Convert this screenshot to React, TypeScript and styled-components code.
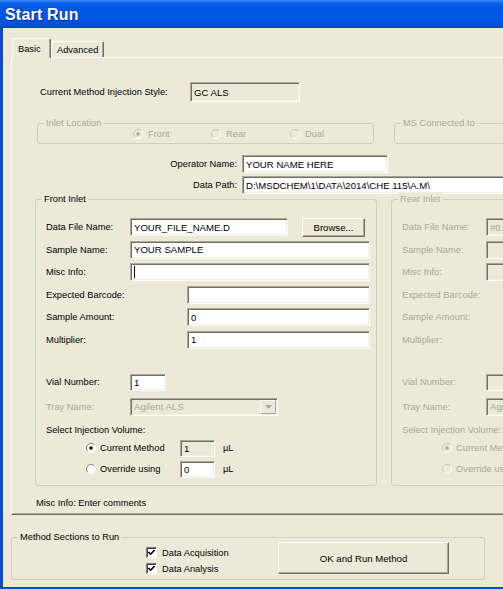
import React from 'react';
import styled, { createGlobalStyle } from 'styled-components';

const BG = '#ECE9D8';
const GREY = '#ACA899';
const DARK = '#716F64';

const GlobalStyle = createGlobalStyle`
  html, body { margin: 0; padding: 0; overflow: hidden; background: ${BG}; }
  body {
    font-family: "Liberation Sans", Arial, sans-serif;
    font-size: 9.3px;
    color: #000;
  }
  * { box-sizing: border-box; }
`;

const Frame = styled.div`
  width: 503px;
  height: 589px;
  overflow: hidden;
  display: flex;
  flex-direction: column;
`;

const TitleBar = styled.div`
  height: 28px;
  flex: none;
  display: flex;
  align-items: center;
  padding: 1px 0 0 5px;
  background: linear-gradient(
    #3C8CF7 0px, #1A6BF0 2px, #0A5CE8 4px, #0058E6 9px,
    #0055E3 18px, #0052DD 23px, #0A4FD8 25px, #0040C4 28px
  );
  color: #fff;
  font-weight: bold;
  font-size: 16px;
  letter-spacing: 0.2px;
  text-shadow: 1px 1px 0 #0A2A8E;
`;

const Body = styled.div`
  flex: 1;
  min-height: 0;
  overflow: hidden;
  background: ${BG};
  border-left: 3px solid #0A4AD8;
  border-bottom: 2px solid #0A4AD8;
  padding: 10px 0 0 8px;
`;

const TabStrip = styled.div`
  display: flex;
  align-items: flex-end;
  height: 19px;
  padding-left: 1px;
`;

const Tab = styled.div<{ $active?: boolean; $w: number }>`
  position: relative;
  z-index: ${p => (p.$active ? 2 : 1)};
  width: ${p => p.$w}px;
  height: ${p => (p.$active ? 20 : 16)}px;
  margin-bottom: ${p => (p.$active ? -1 : 0)}px;
  padding-left: 5px;
  display: flex;
  align-items: center;
  background: ${BG};
  border-style: solid;
  border-width: 1px 1px 0 1px;
  border-color: #fff ${DARK} transparent #fff;
  box-shadow: inset -1px 0 0 ${GREY};
  border-radius: 2px 2px 0 0;
`;

const TabPanel = styled.div`
  width: 560px;
  height: 458px;
  border-style: solid;
  border-width: 1px;
  border-color: #fff ${DARK} ${DARK} #fff;
  box-shadow: inset -1px -1px 0 ${GREY};
  padding-top: 24px;
`;

const StyleRow = styled.div`
  display: flex;
  align-items: center;
  height: 20px;
  padding-left: 28px;
`;

const StyleLabel = styled.span`
  width: 150px;
`;

const TextBox = styled.div<{ $w: number; $h?: number; $tone?: 'edit' | 'readonly' | 'disabled' }>`
  width: ${p => p.$w}px;
  height: ${p => p.$h ?? 18}px;
  flex: none;
  display: flex;
  align-items: center;
  padding: 0 3px;
  white-space: nowrap;
  overflow: hidden;
  border-style: solid;
  border-width: 1px;
  border-color: ${GREY} #fff #fff ${GREY};
  box-shadow: inset 1px 1px 0 ${DARK}, inset -1px -1px 0 #F1EFE2;
  background: ${p => (p.$tone === 'edit' || !p.$tone ? '#fff' : BG)};
  color: ${p => (p.$tone === 'disabled' ? GREY : '#000')};
  font-size: 9.6px;
`;

const Caret = styled.span`
  width: 1px;
  height: 12px;
  background: #000;
`;

const Group = styled.div<{ $w: number; $h: number; $ml: number }>`
  position: relative;
  flex: none;
  width: ${p => p.$w}px;
  height: ${p => p.$h}px;
  margin-left: ${p => p.$ml}px;
  border: 1px solid #D0D0BF;
  border-radius: 3px;
`;

const Legend = styled.span<{ $disabled?: boolean }>`
  position: absolute;
  top: -7px;
  left: 6px;
  padding: 0 2px;
  line-height: 12px;
  background: ${BG};
  color: ${p => (p.$disabled ? GREY : '#000')};
`;

const GroupRow = styled.div<{ $mt: number }>`
  display: flex;
  margin-top: ${p => p.$mt}px;
`;

const LocationRadios = styled.div`
  display: grid;
  grid-template-columns: 78px 79px 79px;
  align-items: center;
  height: 100%;
  padding-left: 95px;
`;

const RadioItem = styled.label<{ $disabled?: boolean; $gap?: number }>`
  display: flex;
  align-items: center;
  gap: ${p => p.$gap ?? 5}px;
  color: ${p => (p.$disabled ? GREY : '#000')};
`;

const PathGrid = styled.div`
  display: grid;
  grid-template-columns: 230px auto;
  grid-auto-rows: 18px;
  row-gap: 3px;
  align-items: center;
  margin-top: 11px;
`;

const PathLabel = styled.span`
  text-align: right;
  padding-right: 5px;
`;

const InletBody = styled.div`
  display: flex;
  flex-direction: column;
  padding: 18px 0 0 10px;
`;

const Row = styled.div<{ $mt?: number; $h?: number }>`
  display: flex;
  align-items: center;
  height: ${p => p.$h ?? 18}px;
  margin-top: ${p => p.$mt ?? 0}px;
  white-space: nowrap;
`;

const FieldLabel = styled.span<{ $w: number; $disabled?: boolean }>`
  width: ${p => p.$w}px;
  flex: none;
  color: ${p => (p.$disabled ? GREY : '#000')};
`;

const Button = styled.button<{ $w: number; $h: number; $ml?: number; $mt?: number }>`
  width: ${p => p.$w}px;
  height: ${p => p.$h}px;
  margin-left: ${p => p.$ml ?? 0}px;
  margin-top: ${p => p.$mt ?? 0}px;
  flex: none;
  padding: 0;
  font-family: inherit;
  font-size: 9.6px;
  color: #000;
  background: ${BG};
  border-style: solid;
  border-width: 1px;
  border-color: #fff ${DARK} ${DARK} #fff;
  box-shadow: inset -1px -1px 0 ${GREY};
`;

const VolumeChoice = styled.div`
  width: 94px;
  margin-left: 40px;
  flex: none;
`;

const Unit = styled.span<{ $disabled?: boolean }>`
  margin-left: 8px;
  color: ${p => (p.$disabled ? GREY : '#000')};
`;

const Combo = styled(TextBox)`
  justify-content: space-between;
  padding-right: 1px;
`;

const ComboButton = styled.span`
  width: 16px;
  height: 14px;
  display: flex;
  align-items: center;
  justify-content: center;
  background: ${BG};
  border-style: solid;
  border-width: 1px;
  border-color: #fff ${GREY} ${GREY} #fff;
`;

const FootNote = styled.div`
  margin: 11px 0 0 24px;
  line-height: 12px;
`;

const MethodBody = styled.div`
  display: flex;
  align-items: flex-start;
  padding-left: 134px;
`;

const CheckList = styled.div`
  width: 132px;
  margin-top: 9px;
  display: flex;
  flex-direction: column;
  gap: 5px;
`;

const CheckItem = styled.label`
  display: flex;
  align-items: center;
  gap: 5px;
  height: 11px;
`;

const CheckBox = styled.span`
  width: 11px;
  height: 11px;
  display: flex;
  align-items: center;
  justify-content: center;
  background: #fff;
  border-style: solid;
  border-width: 1px;
  border-color: #808080 #fff #fff #808080;
  box-shadow: inset 1px 1px 0 #404040;
`;

function Radio({ checked, disabled }: { checked?: boolean; disabled?: boolean }) {
  return (
    <svg width="10" height="10" viewBox="0 0 10 10" style={{ flex: 'none' }}>
      <circle cx="5" cy="5" r="4.5" fill={disabled ? BG : '#fff'} stroke="#fff" />
      <path d="M1.8 8.2 A4.5 4.5 0 0 1 8.2 1.8" fill="none" stroke={disabled ? '#C5C2B2' : '#808080'} />
      {checked && <circle cx="5" cy="5" r="1.7" fill={disabled ? GREY : '#000'} />}
    </svg>
  );
}

function Check() {
  return (
    <CheckBox>
      <svg width="7" height="7" viewBox="0 0 7 7">
        <path d="M0.5 3 L2.6 5.2 L6.5 1" fill="none" stroke="#000" strokeWidth="1.6" />
      </svg>
    </CheckBox>
  );
}

type InletProps = {
  title: string;
  disabled?: boolean;
  ml: number;
  w: number;
  dataFile?: string;
  sample?: string;
  caret?: boolean;
  amount?: string;
  multiplier?: string;
  vial?: string;
  current?: string;
  override?: string;
};

function Inlet(p: InletProps) {
  const d = p.disabled;
  const tone = d ? 'disabled' : 'edit';
  return (
    <Group $w={p.w} $h={287} $ml={p.ml}>
      <Legend $disabled={d}>{p.title}</Legend>
      <InletBody>
        <Row>
          <FieldLabel $w={84} $disabled={d}>Data File Name:</FieldLabel>
          <TextBox $w={158} $tone={tone}>{p.dataFile}</TextBox>
          <Button $w={63} $h={19} $ml={14}>Browse...</Button>
        </Row>
        <Row $mt={4.6}>
          <FieldLabel $w={84} $disabled={d}>Sample Name:</FieldLabel>
          <TextBox $w={240} $tone={tone}>{p.sample}</TextBox>
        </Row>
        <Row $mt={4.6}>
          <FieldLabel $w={84} $disabled={d}>Misc Info:</FieldLabel>
          <TextBox $w={240} $tone={tone}>{p.caret && <Caret />}</TextBox>
        </Row>
        <Row $mt={4.6}>
          <FieldLabel $w={141} $disabled={d}>Expected Barcode:</FieldLabel>
          <TextBox $w={183} $tone={tone} />
        </Row>
        <Row $mt={4.6}>
          <FieldLabel $w={141} $disabled={d}>Sample Amount:</FieldLabel>
          <TextBox $w={183} $tone={tone}>{p.amount}</TextBox>
        </Row>
        <Row $mt={4.6}>
          <FieldLabel $w={141} $disabled={d}>Multiplier:</FieldLabel>
          <TextBox $w={183} $tone={tone}>{p.multiplier}</TextBox>
        </Row>
        <Row $mt={25} $h={17}>
          <FieldLabel $w={84} $disabled={d}>Vial Number:</FieldLabel>
          <TextBox $w={36} $h={17} $tone={tone}>{p.vial}</TextBox>
        </Row>
        <Row $mt={7}>
          <FieldLabel $w={84} $disabled>Tray Name:</FieldLabel>
          <Combo $w={148} $tone="disabled">
            Agilent ALS
            <ComboButton>
              <svg width="7" height="4" viewBox="0 0 7 4">
                <path d="M0 0 H7 L3.5 4 Z" fill={GREY} />
              </svg>
            </ComboButton>
          </Combo>
        </Row>
        <Row $mt={8} $h={12}>
          <FieldLabel $w={200} $disabled={d}>Select Injection Volume:</FieldLabel>
        </Row>
        <Row $mt={4} $h={17}>
          <VolumeChoice>
            <RadioItem $disabled={d} $gap={4}>
              <Radio checked disabled={d} />
              Current Method
            </RadioItem>
          </VolumeChoice>
          <TextBox $w={35} $h={17} $tone={d ? 'disabled' : 'readonly'}>{p.current}</TextBox>
          <Unit $disabled={d}>µL</Unit>
        </Row>
        <Row $mt={4} $h={17}>
          <VolumeChoice>
            <RadioItem $disabled={d} $gap={4}>
              <Radio disabled={d} />
              Override using
            </RadioItem>
          </VolumeChoice>
          <TextBox $w={35} $h={17} $tone={tone}>{p.override}</TextBox>
          <Unit $disabled={d}>µL</Unit>
        </Row>
      </InletBody>
    </Group>
  );
}

export default function App() {
  return (
    <>
      <GlobalStyle />
      <Frame>
        <TitleBar>Start Run</TitleBar>
        <Body>
          <TabStrip>
            <Tab $active $w={39}>Basic</Tab>
            <Tab $w={53}>Advanced</Tab>
          </TabStrip>
          <TabPanel>
            <StyleRow>
              <StyleLabel>Current Method Injection Style:</StyleLabel>
              <TextBox $w={110} $h={20} $tone="readonly">GC ALS</TextBox>
            </StyleRow>

            <GroupRow $mt={21}>
              <Group $w={337} $h={21} $ml={25}>
                <Legend $disabled>Inlet Location</Legend>
                <LocationRadios>
                  <RadioItem $disabled><Radio checked disabled />Front</RadioItem>
                  <RadioItem $disabled><Radio disabled />Rear</RadioItem>
                  <RadioItem $disabled><Radio disabled />Dual</RadioItem>
                </LocationRadios>
              </Group>
              <Group $w={160} $h={21} $ml={20}>
                <Legend $disabled>MS Connected to</Legend>
              </Group>
            </GroupRow>

            <PathGrid>
              <PathLabel>Operator Name:</PathLabel>
              <TextBox $w={146}>YOUR NAME HERE</TextBox>
              <PathLabel>Data Path:</PathLabel>
              <TextBox $w={300}>D:\MSDCHEM\1\DATA\2014\CHE 115\A.M\</TextBox>
            </PathGrid>

            <GroupRow $mt={5}>
              <Inlet
                title="Front Inlet"
                ml={23}
                w={342}
                dataFile="YOUR_FILE_NAME.D"
                sample="YOUR SAMPLE"
                caret
                amount="0"
                multiplier="1"
                vial="1"
                current="1"
                override="0"
              />
              <Inlet title="Rear Inlet" disabled ml={14} w={342} dataFile="#0." />
            </GroupRow>

            <FootNote>Misc Info: Enter comments</FootNote>
          </TabPanel>

          <GroupRow $mt={22}>
            <Group $w={474} $h={43} $ml={0}>
              <Legend>Method Sections to Run</Legend>
              <MethodBody>
                <CheckList>
                  <CheckItem><Check />Data Acquisition</CheckItem>
                  <CheckItem><Check />Data Analysis</CheckItem>
                </CheckList>
                <Button $w={171} $h={32} $mt={4}>OK and Run Method</Button>
              </MethodBody>
            </Group>
          </GroupRow>
        </Body>
      </Frame>
    </>
  );
}
